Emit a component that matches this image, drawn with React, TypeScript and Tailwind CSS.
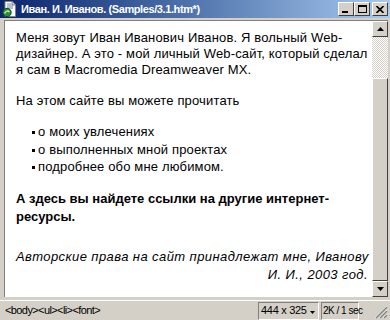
import React from "react";

// Окно документа Dreamweaver MX
function TitleButton({ children, className = "" }: { children: React.ReactNode; className?: string }) {
  return (
    <div
      className={`w-[16px] h-[14px] bg-[#d4d0c8] border border-t-white border-l-white border-r-[#404040] border-b-[#404040] flex items-center justify-center ${className}`}
    >
      {children}
    </div>
  );
}

function ScrollButton({ up }: { up?: boolean }) {
  return (
    <div className="h-[16px] w-[16px] bg-[#d4d0c8] border border-t-white border-l-white border-r-[#404040] border-b-[#404040] flex items-center justify-center shrink-0">
      <svg width="7" height="4" viewBox="0 0 7 4">
        {up ? <path d="M3.5 0 L7 4 L0 4 Z" fill="#000" /> : <path d="M0 0 L7 0 L3.5 4 Z" fill="#000" />}
      </svg>
    </div>
  );
}

export default function App() {
  return (
    <div className="w-[390px] h-[320px] bg-[#d4d0c8] flex flex-col overflow-hidden font-['Liberation_Sans',Arial,sans-serif]">
      {/* Title bar */}
      <div className="h-[18px] flex items-center bg-[linear-gradient(to_right,#0a246a_0%,#3a5c9a_35%,#a6caf0_100%)] pl-[2px] pr-[2px]">
        <svg width="16" height="16" viewBox="0 0 16 16" className="shrink-0">
          <path d="M3 0.5 H10 L13.5 4 V15.5 H3 Z" fill="#fff" stroke="#808080" />
          <path d="M10 0.5 V4 H13.5" fill="#d4d0c8" stroke="#808080" />
          <path d="M5 3 H9 M5 5 H11 M5 7 H11" stroke="#6080c0" />
          <circle cx="5" cy="11.5" r="4.2" fill="#2c8c3c" stroke="#0a4a20" />
          <path d="M2.5 12.5 C4 9.5 6 9.5 7.5 11" stroke="#c8f0a0" strokeWidth="1.4" fill="none" />
        </svg>
        <span className="ml-[3px] text-white font-bold text-[11px] leading-none tracking-[-0.4px] whitespace-nowrap">
          Иван. И. Иванов. (Samples/3.1.htm*)
        </span>
        <div className="flex-1" />
        <div className="flex items-center">
          <TitleButton>
            <div className="w-[6px] h-[2px] bg-black mt-[6px] mr-[2px]" />
          </TitleButton>
          <TitleButton>
            <div className="w-[9px] h-[8px] border border-black border-t-2" />
          </TitleButton>
          <TitleButton className="ml-[2px]">
            <svg width="8" height="7" viewBox="0 0 8 7">
              <path d="M0.5 0 L7.5 7 M7.5 0 L0.5 7" stroke="#000" strokeWidth="1.6" />
            </svg>
          </TitleButton>
        </div>
      </div>

      {/* Document area */}
      <div className="flex-1 flex pt-[2px] pb-[3px] pl-[4px] pr-[2px] min-h-0">
        <div className="flex-1 flex border-l border-t border-[#808080] min-w-0">
          <div className="flex-1 bg-white pl-[11px] pr-[2px] pt-[9px] text-[13px] leading-[16px] tracking-[0.15px] text-black overflow-hidden whitespace-nowrap">
            <p>
              Меня зовут Иван Иванович Иванов. Я вольный Web-
              <br />
              дизайнер. А это - мой личный Web-сайт, который сделал
              <br />я сам в Macromedia Dreamweaver MX.
            </p>
            <p className="mt-[15px]">На этом сайте вы можете прочитать</p>
            <ul className="mt-[14px] pl-[16px] leading-[17.5px]">
              {["о моих увлечениях", "о выполненных мной проектах", "подробнее обо мне любимом."].map((t) => (
                <li key={t} className="flex items-center">
                  <span className="w-[3px] h-[3px] bg-black mr-[3px] mt-[2px]" />
                  {t}
                </li>
              ))}
            </ul>
            <p className="mt-[14px] font-bold leading-[18px] tracking-normal">
              А здесь вы найдете ссылки на другие интернет-
              <br />
              ресурсы.
            </p>
            <p className="mt-[22px] italic text-right leading-[18px] pr-[2px] tracking-[0.42px]">
              Авторские права на сайт принадлежат мне, Иванову
              <br />
              И. И., 2003 год.
            </p>
          </div>
          {/* Scrollbar */}
          <div className="w-[16px] flex flex-col shrink-0">
            <ScrollButton up />
            <div className="h-[41px] bg-[repeating-conic-gradient(#d4d0c8_0_25%,#ffffff_0_50%)] bg-[length:2px_2px]" />
            <div className="flex-1 bg-[#d4d0c8] border border-t-white border-l-white border-r-[#404040] border-b-[#404040]" />
            <ScrollButton />
          </div>
        </div>
      </div>

      {/* Status bar */}
      <div className="h-[20px] border-t border-white flex items-center pl-[5px] pr-[2px] text-[11px] text-black whitespace-nowrap">
        <span className="tracking-[-0.6px]">&lt;body&gt;&lt;ul&gt;&lt;li&gt;&lt;font&gt;</span>
        <div className="flex-1" />
        <div className="h-[18px] w-[61px] border border-t-[#808080] border-l-[#808080] border-r-white border-b-white flex items-center pl-[2px] tracking-[-0.3px]">
          444 x 325
          <svg width="5" height="3" viewBox="0 0 5 3" className="ml-[3px] mt-[3px]">
            <path d="M0 0 H5 L2.5 3 Z" fill="#000" />
          </svg>
        </div>
        <div className="h-[18px] w-[38px] ml-[2px] border border-t-[#808080] border-l-[#808080] border-r-white border-b-white flex items-center pl-[1px] text-[10px] tracking-[-0.5px]">
          2K / 1 sec
        </div>
        <svg width="16" height="16" viewBox="0 0 16 16" className="ml-[13px] self-end mb-[1px]">
          <path d="M15 3 L3 15 M15 7 L7 15 M15 11 L11 15" stroke="#fff" />
          <path d="M15 4 L4 15 M15 8 L8 15 M15 12 L12 15" stroke="#808080" strokeWidth="1.4" />
        </svg>
      </div>
    </div>
  );
}
